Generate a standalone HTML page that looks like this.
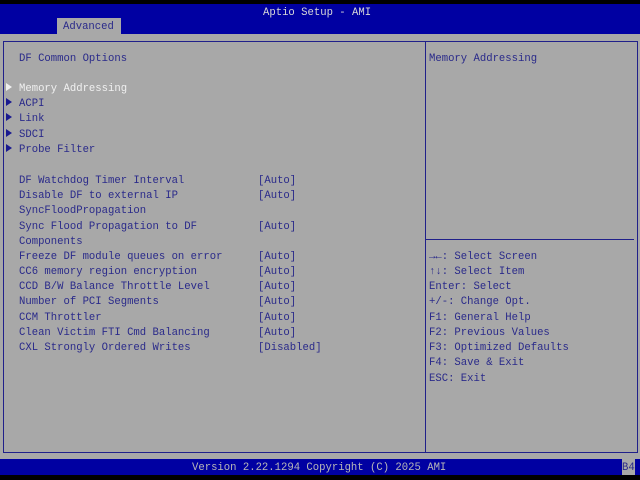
<!DOCTYPE html>
<html><head><meta charset="utf-8"><style>
*{margin:0;padding:0}
body{width:640px;height:480px;background:#000;position:relative;overflow:hidden;font-family:"Liberation Mono","DejaVu Sans Mono",monospace;font-size:10.6px;color:#2a2a8a}
.a{position:absolute;white-space:pre;line-height:12px}
#hdr{position:absolute;left:0;top:4px;width:640px;height:30px;background:#0000a2}
#body{position:absolute;left:0;top:34px;width:640px;height:425px;background:#a8a8a8}
#foot{position:absolute;left:0;top:459px;width:640px;height:16px;background:#0000a2}
.fr{position:absolute;border:1px solid #20208a}
.w{color:#f0f0f0}
.t{position:absolute;left:6px;width:0;height:0;border-top:4px solid transparent;border-bottom:4px solid transparent;border-left:6px solid #1a1a90}
</style></head><body>
<div id="hdr"></div>
<div class="a" style="left:263px;top:7px;color:#d8d8d8">Aptio Setup - AMI</div>
<div style="position:absolute;left:57px;top:18px;width:64px;height:17px;background:#a8a8a8"></div>
<div class="a" style="left:63px;top:21px;color:#2a2a8a">Advanced</div>
<div id="body"></div>
<div class="fr" style="left:3px;top:41px;width:633px;height:410px"></div>
<div style="position:absolute;left:425px;top:41px;width:1px;height:411px;background:#20208a"></div>
<div style="position:absolute;left:426px;top:239px;width:208px;height:1px;background:#20208a"></div>
<div class="a" style="left:19px;top:53px">DF Common Options</div>
<div class="t" style="top:83px;border-left-color:#f0f0f0"></div>
<div class="t" style="top:98px"></div>
<div class="t" style="top:113px"></div>
<div class="t" style="top:129px"></div>
<div class="t" style="top:144px"></div>
<div class="a w" style="left:19px;top:83px">Memory Addressing</div>
<div class="a" style="left:19px;top:98px">ACPI</div>
<div class="a" style="left:19px;top:113px">Link</div>
<div class="a" style="left:19px;top:129px">SDCI</div>
<div class="a" style="left:19px;top:144px">Probe Filter</div>
<div class="a" style="left:19px;top:175px">DF Watchdog Timer Interval</div>
<div class="a" style="left:19px;top:190px">Disable DF to external IP</div>
<div class="a" style="left:19px;top:205px">SyncFloodPropagation</div>
<div class="a" style="left:19px;top:221px">Sync Flood Propagation to DF</div>
<div class="a" style="left:19px;top:236px">Components</div>
<div class="a" style="left:19px;top:251px">Freeze DF module queues on error</div>
<div class="a" style="left:19px;top:266px">CC6 memory region encryption</div>
<div class="a" style="left:19px;top:281px">CCD B/W Balance Throttle Level</div>
<div class="a" style="left:19px;top:296px">Number of PCI Segments</div>
<div class="a" style="left:19px;top:312px">CCM Throttler</div>
<div class="a" style="left:19px;top:327px">Clean Victim FTI Cmd Balancing</div>
<div class="a" style="left:19px;top:342px">CXL Strongly Ordered Writes</div>
<div class="a" style="left:258px;top:175px">[Auto]</div>
<div class="a" style="left:258px;top:190px">[Auto]</div>
<div class="a" style="left:258px;top:221px">[Auto]</div>
<div class="a" style="left:258px;top:251px">[Auto]</div>
<div class="a" style="left:258px;top:266px">[Auto]</div>
<div class="a" style="left:258px;top:281px">[Auto]</div>
<div class="a" style="left:258px;top:296px">[Auto]</div>
<div class="a" style="left:258px;top:312px">[Auto]</div>
<div class="a" style="left:258px;top:327px">[Auto]</div>
<div class="a" style="left:258px;top:342px">[Disabled]</div>
<div class="a" style="left:429px;top:53px">Memory Addressing</div>
<div class="a" style="left:429px;top:251px"><b>→←</b>: Select Screen</div>
<div class="a" style="left:429px;top:266px"><b>↑↓</b>: Select Item</div>
<div class="a" style="left:429px;top:281px">Enter: Select</div>
<div class="a" style="left:429px;top:296px">+/-: Change Opt.</div>
<div class="a" style="left:429px;top:312px">F1: General Help</div>
<div class="a" style="left:429px;top:327px">F2: Previous Values</div>
<div class="a" style="left:429px;top:342px">F3: Optimized Defaults</div>
<div class="a" style="left:429px;top:357px">F4: Save &amp; Exit</div>
<div class="a" style="left:429px;top:373px">ESC: Exit</div>
<div id="foot"></div>
<div class="a" style="left:192px;top:462px;color:#b8b8b8">Version 2.22.1294 Copyright (C) 2025 AMI</div>
<div style="position:absolute;left:622px;top:459px;width:13px;height:16px;background:#a8a8a8"></div>
<div class="a" style="left:622px;top:462px;color:#2a2a8a">B4</div>
</body></html>
